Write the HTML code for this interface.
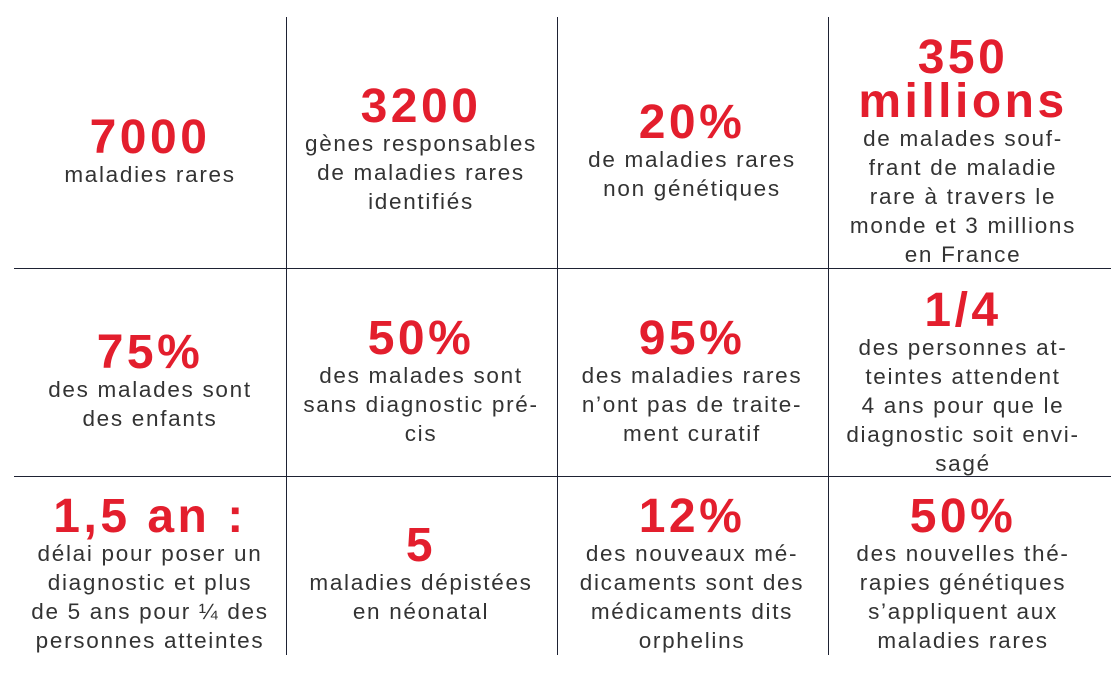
<!DOCTYPE html>
<html><head><meta charset="utf-8"><style>
html,body{margin:0;padding:0;background:#fff;}
body{width:1119px;height:680px;position:relative;overflow:hidden;font-family:"Liberation Sans",sans-serif;}
.v{position:absolute;top:17px;height:638px;width:1px;background:#1e2233;}
.h{position:absolute;left:14px;width:1097px;height:1px;background:#1e2233;}
.c{position:absolute;width:270px;text-align:center;}
.b{color:#e31e2d;font-weight:bold;font-size:48px;line-height:44px;letter-spacing:3.5px;}
.t{color:#333;font-size:22.5px;line-height:29px;letter-spacing:1.7px;white-space:nowrap;}
</style></head><body>
<div class="v" style="left:286px"></div>
<div class="v" style="left:557px"></div>
<div class="v" style="left:828px"></div>
<div class="h" style="top:268px"></div>
<div class="h" style="top:476px"></div>

<div class="c" style="left:15px;top:116px"><div class="b">7000</div><div class="t">maladies rares</div></div>
<div class="c" style="left:286px;top:85px"><div class="b">3200</div><div class="t">gènes responsables<br>de maladies rares<br>identifiés</div></div>
<div class="c" style="left:557px;top:101px"><div class="b">20%</div><div class="t">de maladies rares<br>non génétiques</div></div>
<div class="c" style="left:828px;top:36px"><div class="b">350<br>millions</div><div class="t">de malades souf-<br>frant de maladie<br>rare à travers le<br>monde et 3 millions<br>en France</div></div>

<div class="c" style="left:15px;top:331px"><div class="b">75%</div><div class="t">des malades sont<br>des enfants</div></div>
<div class="c" style="left:286px;top:317px"><div class="b">50%</div><div class="t">des malades sont<br>sans diagnostic pré-<br>cis</div></div>
<div class="c" style="left:557px;top:317px"><div class="b">95%</div><div class="t">des maladies rares<br>n’ont pas de traite-<br>ment curatif</div></div>
<div class="c" style="left:828px;top:289px"><div class="b">1/4</div><div class="t">des personnes at-<br>teintes attendent<br>4 ans pour que le<br>diagnostic soit envi-<br>sagé</div></div>

<div class="c" style="left:15px;top:495px"><div class="b">1,5 an :</div><div class="t">délai pour poser un<br>diagnostic et plus<br>de 5 ans pour ¼ des<br>personnes atteintes</div></div>
<div class="c" style="left:286px;top:524px"><div class="b">5</div><div class="t">maladies dépistées<br>en néonatal</div></div>
<div class="c" style="left:557px;top:495px"><div class="b">12%</div><div class="t">des nouveaux mé-<br>dicaments sont des<br>médicaments dits<br>orphelins</div></div>
<div class="c" style="left:828px;top:495px"><div class="b">50%</div><div class="t">des nouvelles thé-<br>rapies génétiques<br>s’appliquent aux<br>maladies rares</div></div>
</body></html>
